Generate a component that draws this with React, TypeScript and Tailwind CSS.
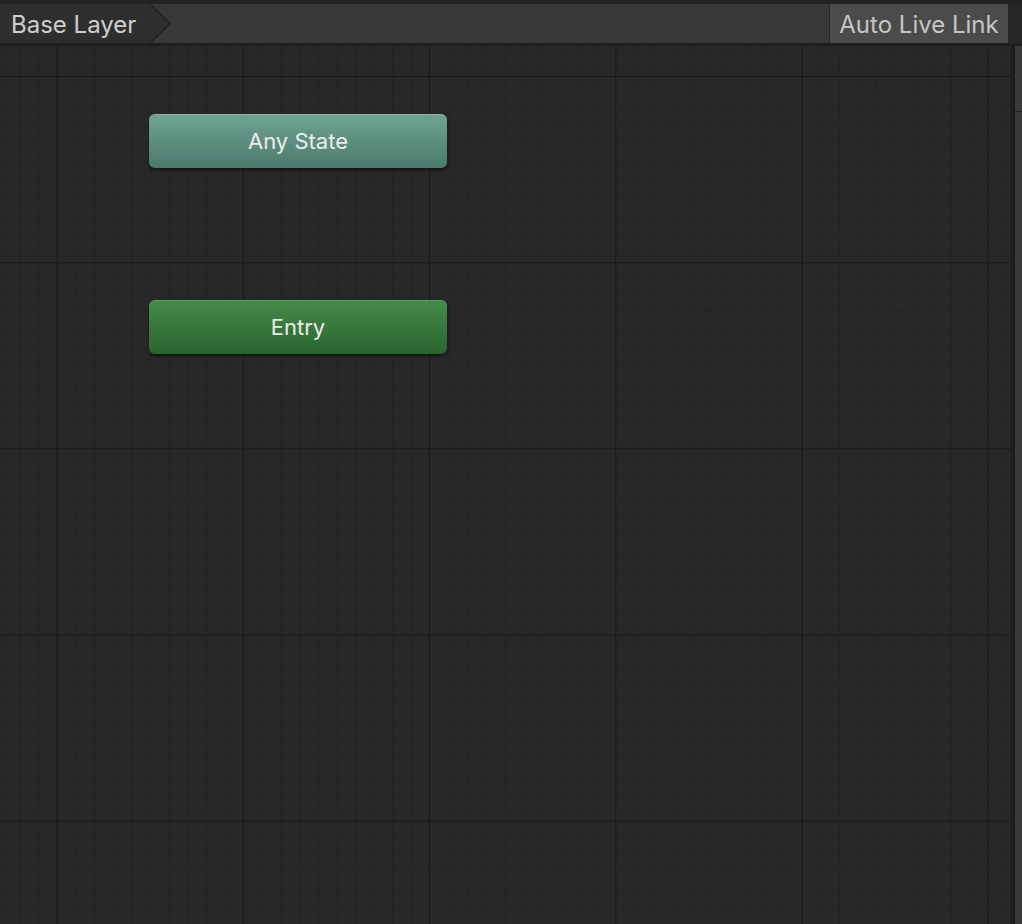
import React from "react";

const MINOR = 18.62;
const MAJOR = 186.2;

function GridBackground() {
  return (
    <svg className="absolute inset-0 h-full w-full" aria-hidden>
      <defs>
        <pattern
          id="minor"
          width={MINOR}
          height={MINOR}
          patternUnits="userSpaceOnUse"
          x={56.5 - MAJOR}
          y={30 - MAJOR}
        >
          <path d={`M ${MINOR} 0 L 0 0 0 ${MINOR}`} fill="none" stroke="#1d1d1d" strokeWidth="1" />
        </pattern>
        <pattern
          id="major"
          width={MAJOR}
          height={MAJOR}
          patternUnits="userSpaceOnUse"
          x={56.5 - MAJOR}
          y={30 - MAJOR}
        >
          <rect width={MAJOR} height={MAJOR} fill="url(#minor)" />
          <path d={`M ${MAJOR} 0 L 0 0 0 ${MAJOR}`} fill="none" stroke="#141414" strokeWidth="1.3" />
        </pattern>
      </defs>
      <rect width="100%" height="100%" fill="url(#major)" />
    </svg>
  );
}

function StateNode({ label, top, className }: { label: string; top: number; className: string }) {
  return (
    <div
      className={`absolute left-[149px] flex h-[54px] w-[298px] items-center justify-center rounded-[6px] text-[22px] text-[#ececec] shadow-[0_2px_3px_rgba(0,0,0,0.55)] ${className}`}
      style={{ top }}
    >
      {label}
    </div>
  );
}

export default function App() {
  return (
    <div className="flex h-[924px] w-[1022px] flex-col overflow-hidden bg-[#282828] font-['Inter','Noto_Sans',sans-serif]">
      {/* ツールバー */}
      <div className="flex h-[46px] shrink-0 border-t-[4px] border-b-[3px] border-t-[#232323] border-b-[#1e1e1e] bg-[#383838]">
        <div className="relative flex items-center bg-[#2e2e2e] pl-[11px] pr-[14px] pt-[2px] text-[24px] text-[#cfcfcf]">
          Base Layer
          <svg className="absolute left-full top-0 h-full w-[22px]" viewBox="0 0 22 39" preserveAspectRatio="none">
            <path d="M0 0 L20 19.5 L0 39 Z" fill="#2e2e2e" />
            <path d="M0 0 L20 19.5 L0 39" fill="none" stroke="#222222" strokeWidth="1.5" />
          </svg>
        </div>
        <div className="flex-1" />
        <div className="flex w-[179px] items-center justify-center border-l border-[#2a2a2a] bg-[#4b4b4b] pt-[2px] text-[24px] text-[#c6c6c6]">
          Auto Live Link
        </div>
        <div className="w-[14px] bg-[#262626]" />
      </div>

      <div className="flex flex-1">
        {/* キャンバス */}
        <div className="relative flex-1 overflow-hidden">
          <GridBackground />
          <StateNode
            label="Any State"
            top={68}
            className="border-t border-[#86b3a6] bg-[linear-gradient(#6ea393,#4b7a6d)]"
          />
          <StateNode
            label="Entry"
            top={254}
            className="border-t border-[#5e9a60] bg-[linear-gradient(#468a48,#2a652f)]"
          />
        </div>

        {/* スクロールバー */}
        <div className="w-[4px] bg-[#1c1c1c]" />
        <div className="flex w-[7px] flex-col bg-[#3a3a3a]">
          <div className="h-[66px] border-b border-[#1e1e1e]" />
        </div>
      </div>
    </div>
  );
}
